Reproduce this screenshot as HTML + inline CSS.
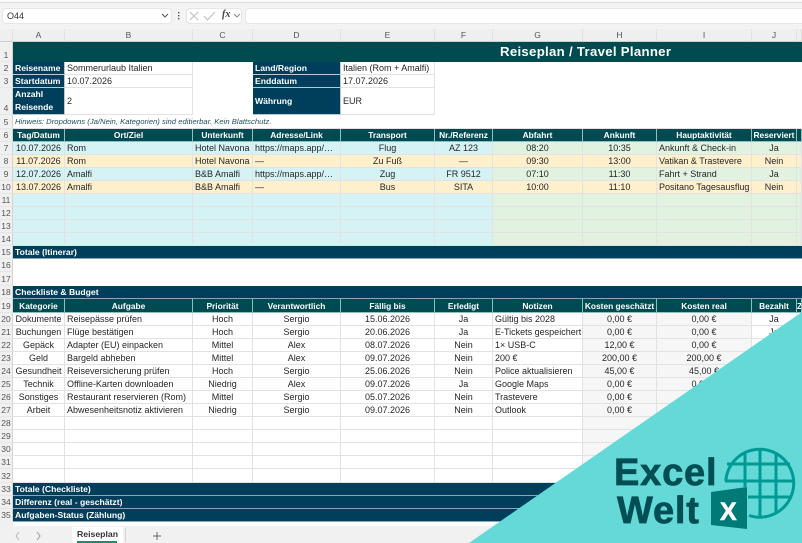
<!DOCTYPE html>
<html lang="de">
<head>
<meta charset="utf-8">
<title>Reiseplan</title>
<style>
html,body{margin:0;padding:0;width:802px;height:543px;overflow:hidden;background:#fff;font-family:"Liberation Sans",sans-serif}
#top{position:absolute;left:0;top:0;width:802px;height:29px;background:#f3f3f3}
#top .s1{position:absolute;left:0;top:0;width:802px;height:2px;background:#fafafa;border-bottom:1px solid #dcdcdc}
.box{position:absolute;top:8px;height:16px;background:#fff;border:1px solid #e6e6e6;border-radius:4px;box-sizing:border-box}
#sheet{position:absolute;left:0;top:29px;width:802px;border-collapse:separate;border-spacing:0;table-layout:fixed;font-size:9px;color:#262626;filter:blur(.25px)}
#sheet td,#sheet th{padding:0 0 0 2px;box-sizing:border-box;overflow:hidden;white-space:nowrap;vertical-align:bottom;line-height:12px;font-weight:normal;text-align:left;border-right:1px solid #e2e2e2;border-bottom:1px solid #e2e2e2}
#sheet .r{background:#f0f0f0;text-align:center;padding:0;color:#555;font-size:8.5px;border-right:1px solid #d4d4d4;border-bottom:1px solid #e6e6e6}
#sheet .h{background:#efefef;text-align:center;padding:0;color:#555;font-size:8.5px;border-right:1px solid #e0e0e0;border-bottom:1px solid #cfcfcf;vertical-align:middle}
#sheet .c{text-align:center;padding:0}
#sheet .n{border-right:0;border-bottom:0}
#sheet .hd{background:#004b52;color:#fff;font-weight:bold;text-align:center;padding:0;font-size:8.4px;border-right:1px solid #8fc0c0;border-bottom:1px solid #8fc0c0}
#sheet .lb{background:#003f5c;color:#fff;font-weight:bold;font-size:8.6px;border-right:1px solid #b9c9cf;border-bottom:1px solid #b9c9cf;padding-left:2px}
#sheet .sec{background:#003f5c;color:#fff;font-weight:bold;font-size:8.6px;border-right:0;border-bottom:1px solid #8aa6b3;padding-left:2px}
#sheet .ti{background:#004b50;color:#fff;font-weight:bold;font-size:13.2px;letter-spacing:.3px;padding-left:487px;border:0;vertical-align:middle;line-height:20px}
#sheet .b{background:#d5f2f5}
#sheet .o{background:#fff0cd}
#sheet .g{background:#e2f2e0}
#sheet .k{background:#f6f6f6}
#sheet .hint{font-style:italic;font-size:7.7px;color:#24505c;border:0;border-bottom:1px solid #e2e2e2}
#tabs{position:absolute;left:0;top:526px;width:802px;height:17px;background:#f1f1f1}
#tab{position:absolute;left:72px;top:1px;width:51px;height:16px;background:#fff;text-align:center;font-weight:bold;font-size:8.7px;line-height:15px;color:#333}
#tab i{position:absolute;left:5px;right:6px;bottom:0;height:2px;background:#11916c}
svg{position:absolute}
#logo{position:absolute;left:0;top:0;width:802px;height:543px}
.lt{position:absolute;font-family:"Liberation Sans",sans-serif;font-weight:bold;color:#004f55;line-height:40px;font-size:38px;letter-spacing:.8px;-webkit-text-stroke:.7px #004f55}
</style>
</head>
<body>
<div id="top">
  <div class="s1"></div>
  <div class="box" style="left:2px;width:170px"><span style="position:absolute;left:4px;top:1px;font-size:9px;line-height:13px;color:#333">O44</span></div>
  <div class="box" style="left:186px;width:56px"></div>
  <div class="box" style="left:245px;width:570px"></div>
  <svg style="left:0;top:0" width="260" height="29" fill="none">
    <path d="M162 14l3 3 3-3" stroke="#555" stroke-width="1"/>
    <rect x="178" y="12" width="1.4" height="1.4" fill="#555"/><rect x="178" y="15" width="1.4" height="1.4" fill="#555"/><rect x="178" y="18" width="1.4" height="1.4" fill="#555"/>
    <path d="M190 12l8 8M198 12l-8 8" stroke="#bdbdbd" stroke-width="1"/>
    <path d="M204 16l3.500 4 7.500-8" stroke="#bdbdbd" stroke-width="1"/>
    <path d="M234 14l3 3 3-3" stroke="#888" stroke-width="1"/>
  </svg>
  <span style="position:absolute;left:222px;top:9px;font:italic bold 10px 'Liberation Serif',serif;color:#444">fx</span>
</div>

<table id="sheet">
<colgroup><col style="width:13px"><col style="width:52px"><col style="width:128px"><col style="width:60px"><col style="width:88px"><col style="width:94px"><col style="width:58px"><col style="width:90px"><col style="width:74px"><col style="width:95px"><col style="width:45px"><col style="width:5px"></colgroup>
<tr style="height:13px"><td class="h"></td><td class="h">A</td><td class="h">B</td><td class="h">C</td><td class="h">D</td><td class="h">E</td><td class="h">F</td><td class="h">G</td><td class="h">H</td><td class="h">I</td><td class="h">J</td><td class="h"></td></tr>
<tr style="height:20px"><td class="r">1</td><td class="ti" colspan="11">Reiseplan / Travel Planner</td></tr>
<tr style="height:13px"><td class="r">2</td><td class="lb">Reisename</td><td>Sommerurlaub Italien</td><td class="n"></td><td class="lb">Land/Region</td><td>Italien (Rom + Amalfi)</td><td class="n" colspan="6"></td></tr>
<tr style="height:13px"><td class="r">3</td><td class="lb">Startdatum</td><td>10.07.2026</td><td class="n"></td><td class="lb">Enddatum</td><td>17.07.2026</td><td class="n" colspan="6"></td></tr>
<tr style="height:26px"><td class="r">4</td><td class="lb" style="white-space:normal;line-height:13px;vertical-align:middle">Anzahl Reisende</td><td style="vertical-align:middle">2</td><td class="n"></td><td class="lb" style="vertical-align:middle">Währung</td><td style="vertical-align:middle">EUR</td><td class="n" colspan="6"></td></tr>
<tr style="height:14px"><td class="r">5</td><td class="hint" colspan="11">Hinweis: Dropdowns (Ja/Nein, Kategorien) sind editierbar. Kein Blattschutz.</td></tr>
<tr style="height:13px"><td class="r">6</td><td class="hd">Tag/Datum</td><td class="hd">Ort/Ziel</td><td class="hd">Unterkunft</td><td class="hd">Adresse/Link</td><td class="hd">Transport</td><td class="hd">Nr./Referenz</td><td class="hd">Abfahrt</td><td class="hd">Ankunft</td><td class="hd">Hauptaktivität</td><td class="hd">Reserviert</td><td class="hd"></td></tr>
<tr style="height:13px"><td class="r">7</td><td class="b c">10.07.2026</td><td class="b">Rom</td><td class="b">Hotel Navona</td><td class="b">https://maps.app/…</td><td class="b c">Flug</td><td class="b c">AZ 123</td><td class="g c">08:20</td><td class="g c">10:35</td><td class="g">Ankunft &amp; Check-in</td><td class="g c">Ja</td><td class="g"></td></tr>
<tr style="height:13px"><td class="r">8</td><td class="o c">11.07.2026</td><td class="o">Rom</td><td class="o">Hotel Navona</td><td class="o">—</td><td class="o c">Zu Fuß</td><td class="o c">—</td><td class="o c">09:30</td><td class="o c">13:00</td><td class="o">Vatikan &amp; Trastevere</td><td class="o c">Nein</td><td class="o"></td></tr>
<tr style="height:13px"><td class="r">9</td><td class="b c">12.07.2026</td><td class="b">Amalfi</td><td class="b">B&amp;B Amalfi</td><td class="b">https://maps.app/…</td><td class="b c">Zug</td><td class="b c">FR 9512</td><td class="g c">07:10</td><td class="g c">11:30</td><td class="g">Fahrt + Strand</td><td class="g c">Ja</td><td class="g"></td></tr>
<tr style="height:13px"><td class="r">10</td><td class="o c">13.07.2026</td><td class="o">Amalfi</td><td class="o">B&amp;B Amalfi</td><td class="o">—</td><td class="o c">Bus</td><td class="o c">SITA</td><td class="o c">10:00</td><td class="o c">11:10</td><td class="o">Positano Tagesausflug</td><td class="o c">Nein</td><td class="o"></td></tr>
<tr style="height:13px"><td class="r">11</td><td class="b"></td><td class="b"></td><td class="b"></td><td class="b"></td><td class="b"></td><td class="b"></td><td class="g"></td><td class="g"></td><td class="g"></td><td class="g"></td><td class="g"></td></tr>
<tr style="height:13px"><td class="r">12</td><td class="b"></td><td class="b"></td><td class="b"></td><td class="b"></td><td class="b"></td><td class="b"></td><td class="g"></td><td class="g"></td><td class="g"></td><td class="g"></td><td class="g"></td></tr>
<tr style="height:13px"><td class="r">13</td><td class="b"></td><td class="b"></td><td class="b"></td><td class="b"></td><td class="b"></td><td class="b"></td><td class="g"></td><td class="g"></td><td class="g"></td><td class="g"></td><td class="g"></td></tr>
<tr style="height:13px"><td class="r">14</td><td class="b"></td><td class="b"></td><td class="b"></td><td class="b"></td><td class="b"></td><td class="b"></td><td class="g"></td><td class="g"></td><td class="g"></td><td class="g"></td><td class="g"></td></tr>
<tr style="height:13px"><td class="r">15</td><td class="sec" colspan="11">Totale (Itinerar)</td></tr>
<tr style="height:13px"><td class="r">16</td><td class="n" colspan="11"></td></tr>
<tr style="height:14px"><td class="r">17</td><td class="n" colspan="11"></td></tr>
<tr style="height:13px"><td class="r">18</td><td class="sec" colspan="11">Checkliste &amp; Budget</td></tr>
<tr style="height:14px"><td class="r">19</td><td class="hd">Kategorie</td><td class="hd">Aufgabe</td><td class="hd">Priorität</td><td class="hd">Verantwortlich</td><td class="hd">Fällig bis</td><td class="hd">Erledigt</td><td class="hd">Notizen</td><td class="hd">Kosten geschätzt</td><td class="hd">Kosten real</td><td class="hd">Bezahlt</td><td class="hd">Z</td></tr>
<tr style="height:13px"><td class="r">20</td><td class="c">Dokumente</td><td>Reisepässe prüfen</td><td class="c">Hoch</td><td class="c">Sergio</td><td class="c">15.06.2026</td><td class="c">Ja</td><td>Gültig bis 2028</td><td class="c k">0,00 €</td><td class="c k">0,00 €</td><td class="c">Ja</td><td></td></tr>
<tr style="height:13px"><td class="r">21</td><td class="c">Buchungen</td><td>Flüge bestätigen</td><td class="c">Hoch</td><td class="c">Sergio</td><td class="c">20.06.2026</td><td class="c">Ja</td><td>E-Tickets gespeichert</td><td class="c k">0,00 €</td><td class="c k">0,00 €</td><td class="c">Ja</td><td></td></tr>
<tr style="height:13px"><td class="r">22</td><td class="c">Gepäck</td><td>Adapter (EU) einpacken</td><td class="c">Mittel</td><td class="c">Alex</td><td class="c">08.07.2026</td><td class="c">Nein</td><td>1× USB-C</td><td class="c k">12,00 €</td><td class="c k">0,00 €</td><td class="c"></td><td></td></tr>
<tr style="height:13px"><td class="r">23</td><td class="c">Geld</td><td>Bargeld abheben</td><td class="c">Mittel</td><td class="c">Alex</td><td class="c">09.07.2026</td><td class="c">Nein</td><td>200 €</td><td class="c k">200,00 €</td><td class="c k">200,00 €</td><td class="c"></td><td></td></tr>
<tr style="height:13px"><td class="r">24</td><td class="c">Gesundheit</td><td>Reiseversicherung prüfen</td><td class="c">Hoch</td><td class="c">Sergio</td><td class="c">25.06.2026</td><td class="c">Nein</td><td>Police aktualisieren</td><td class="c k">45,00 €</td><td class="c k">45,00 €</td><td class="c"></td><td></td></tr>
<tr style="height:13px"><td class="r">25</td><td class="c">Technik</td><td>Offline-Karten downloaden</td><td class="c">Niedrig</td><td class="c">Alex</td><td class="c">09.07.2026</td><td class="c">Ja</td><td>Google Maps</td><td class="c k">0,00 €</td><td class="c k">0,00 €</td><td class="c"></td><td></td></tr>
<tr style="height:13px"><td class="r">26</td><td class="c">Sonstiges</td><td>Restaurant reservieren (Rom)</td><td class="c">Mittel</td><td class="c">Sergio</td><td class="c">05.07.2026</td><td class="c">Nein</td><td>Trastevere</td><td class="c k">0,00 €</td><td class="c k"></td><td class="c"></td><td></td></tr>
<tr style="height:13px"><td class="r">27</td><td class="c">Arbeit</td><td>Abwesenheitsnotiz aktivieren</td><td class="c">Niedrig</td><td class="c">Sergio</td><td class="c">09.07.2026</td><td class="c">Nein</td><td>Outlook</td><td class="c k">0,00 €</td><td class="c k"></td><td class="c"></td><td></td></tr>
<tr style="height:13px"><td class="r">28</td><td></td><td></td><td></td><td></td><td></td><td></td><td></td><td class="k"></td><td class="k"></td><td></td><td></td></tr>
<tr style="height:13px"><td class="r">29</td><td></td><td></td><td></td><td></td><td></td><td></td><td></td><td class="k"></td><td class="k"></td><td></td><td></td></tr>
<tr style="height:13px"><td class="r">30</td><td></td><td></td><td></td><td></td><td></td><td></td><td></td><td class="k"></td><td class="k"></td><td></td><td></td></tr>
<tr style="height:13px"><td class="r">31</td><td></td><td></td><td></td><td></td><td></td><td></td><td></td><td class="k"></td><td class="k"></td><td></td><td></td></tr>
<tr style="height:14px"><td class="r">32</td><td></td><td></td><td></td><td></td><td></td><td></td><td></td><td class="k"></td><td class="k"></td><td></td><td></td></tr>
<tr style="height:13px"><td class="r">33</td><td class="sec" colspan="11">Totale (Checkliste)</td></tr>
<tr style="height:13px"><td class="r">34</td><td class="sec" colspan="11">Differenz (real - geschätzt)</td></tr>
<tr style="height:13px"><td class="r">35</td><td class="sec" colspan="11">Aufgaben-Status (Zählung)</td></tr>
</table>
<div style="position:absolute;left:0;top:521px;width:13px;height:5px;background:#f0f0f0"></div>

<div id="tabs">
  <div id="tab">Reiseplan<i></i></div>
  <svg style="left:0;top:0" width="170" height="17" fill="none">
    <path d="M19 6l-3 4 3 4" stroke="#b5b5b5" stroke-width="1"/>
    <path d="M37 6l3 4-3 4" stroke="#999" stroke-width="1"/>
    <path d="M153 10h8M157 6v8" stroke="#666" stroke-width="1"/>
    <path d="M125.500 2v14" stroke="#d4d4d4" stroke-width="1"/>
  </svg>
</div>

<div id="logo">
  <svg style="left:0;top:0" width="802" height="543" fill="none">
    <polygon points="802,312 802,543 469,543" fill="#65d9d7"/>
    <g stroke="#009a96" stroke-width="3">
      <path d="M725.800 481A34 34 0 1 1 749 515.500" fill="none"/>
      <path d="M745 453V487M760 449V517M776 453V513M727 464H790M725 481H793M748 497H790"/>
    </g>
    <polygon points="711,492 747,487 747,529 711,525" fill="#007a77"/>
  </svg>
  <span class="lt" style="left:614px;top:453px">Excel</span>
  <span class="lt" style="left:617px;top:491px">Welt</span>
  <span style="position:absolute;left:720px;top:497px;font:bold 25px/30px 'Liberation Sans',sans-serif;color:#fff;-webkit-text-stroke:.6px #fff">X</span>
</div>
</body>
</html>
